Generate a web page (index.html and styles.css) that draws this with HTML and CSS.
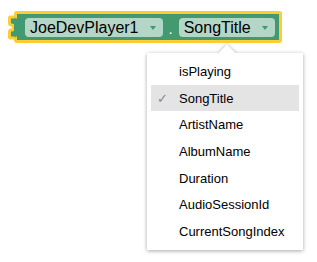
FILE: index.html
```html
<!DOCTYPE html>
<html lang="en">
<head>
    <meta charset="UTF-8">
    <title>Player block</title>
    <link rel="stylesheet" href="styles.css">
</head>
<body>

    <div class="canvas">
        <div class="block">
            <svg class="tab" width="16" height="30" viewBox="0 0 16 30">
                <path d="M10.5 3 H5.5 Q4.5 3 4.5 4 V9 Q4.5 11 6.5 11 Q8.5 11 8.5 13.5 Q8.5 16 6.5 16 Q4.5 16 4.5 18 V23 Q4.5 24 5.5 24 H10.5" fill="#439970" stroke="#ffcc33" stroke-width="3" stroke-linejoin="round"/>
                <rect x="9" y="4.5" width="5" height="18" fill="#439970"/>
            </svg>
            <div class="field">
                <span>JoeDevPlayer1</span>
                <i class="caret"></i>
            </div>
            <span class="dot">.</span>
            <div class="field">
                <span>SongTitle</span>
                <i class="caret"></i>
            </div>
        </div>

        <!-- menu of the second field -->
        <div class="menu">
            <div class="menu-arrow"></div>
            <div class="item"><span class="check"></span>isPlaying</div>
            <div class="item selected"><span class="check">✓</span>SongTitle</div>
            <div class="item"><span class="check"></span>ArtistName</div>
            <div class="item"><span class="check"></span>AlbumName</div>
            <div class="item"><span class="check"></span>Duration</div>
            <div class="item"><span class="check"></span>AudioSessionId</div>
            <div class="item"><span class="check"></span>CurrentSongIndex</div>
        </div>
    </div>

</body>
</html>
```

FILE: styles.css
```css
:root {
    --green: #439970;
    --yellow: #ffcc33;
    --hover: #e4e4e4;
}
body {
    margin: 0;
    background: white;
    font-family: "Liberation Sans", Arial, sans-serif;
}
.canvas {
    position: relative;
    height: 262px;
    padding: 11px 0 0 14px;
    box-sizing: border-box;
}
.block {
    position: relative;
    display: inline-flex;
    align-items: center;
    background: var(--green);
    border: 3px solid var(--yellow);
    border-radius: 3px;
    padding: 4px 4px 3px 8px;
}
.tab {
    position: absolute;
    left: -12px;
    top: 0;
}
.field {
    display: flex;
    align-items: center;
    height: 19px;
    padding: 0 7px 0 5px;
    border-radius: 4px;
    background: rgba(255, 255, 255, 0.6);
    font-size: 16px;
    color: #000;
}
.caret {
    width: 0;
    height: 0;
    margin-left: 11px;
    border-left: 3.5px solid transparent;
    border-right: 3.5px solid transparent;
    border-top: 4px solid var(--green);
}
.dot {
    color: white;
    font-size: 15px;
    margin: 2px 6px 0;
}
.menu {
    position: absolute;
    left: 147px;
    top: 53px;
    width: 156px;
    padding: 5px 0;
    background: white;
    box-shadow: 0 1px 4px rgba(0, 0, 0, 0.35);
}
.menu-arrow {
    position: absolute;
    left: 74px;
    top: -6px;
    width: 12px;
    height: 12px;
    background: white;
    transform: rotate(45deg);
    box-shadow: 0 0 4px rgba(0, 0, 0, 0.3);
    clip-path: polygon(-50% -50%, 150% -50%, -50% 150%);
    z-index: 1;
}
.item {
    display: flex;
    align-items: center;
    height: 26.7px;
    margin: 0 4px;
    font-size: 13px;
    color: #000;
}
.item.selected {
    background: var(--hover);
}
.check {
    width: 22px;
    padding-left: 6px;
    color: #888;
    font-family: "DejaVu Sans", sans-serif;
    font-size: 13px;
}
```
